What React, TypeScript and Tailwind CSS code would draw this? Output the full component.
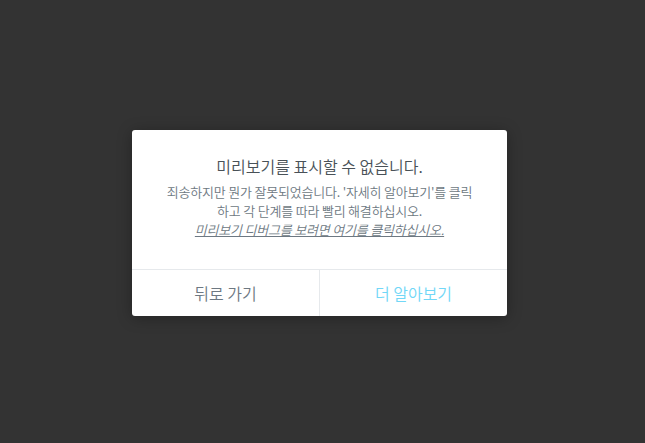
import React from "react";

const font = { fontFamily: '"Noto Sans CJK KR", sans-serif' };

export default function App() {
  return (
    <div className="w-[645px] h-[443px] bg-[#333333] flex items-start justify-center pt-[130px] pr-[6px]" style={font}>
      <div className="w-[375px] bg-white rounded-[3px] shadow-[0_2px_15px_rgba(0,0,0,0.3)] overflow-hidden font-[350]">
        <div className="h-[139px] pt-[26px] px-3 text-center">
          <div className="text-[16px] leading-[21px] text-[#495157]">미리보기를 표시할 수 없습니다.</div>
          <div className="mt-[5px] text-[13px] leading-[19px] text-[#6d7882] tracking-[-0.2px]">
            죄송하지만 뭔가 잘못되었습니다. '자세히 알아보기'를 클릭
            <br />
            하고 각 단계를 따라 빨리 해결하십시오.
            <br />
            <a href="#" className="italic underline">미리보기 디버그를 보려면 여기를 클릭하십시오.</a>
          </div>
        </div>
        <div className="flex border-t border-[#e6e9ec] h-[47px]">
          <button className="flex-1 text-[16px] font-[350] text-[#6d7882] border-r border-[#e6e9ec]">뒤로 가기</button>
          <button className="flex-1 text-[16px] font-[350] text-[#71d7f7]">더 알아보기</button>
        </div>
      </div>
    </div>
  );
}
